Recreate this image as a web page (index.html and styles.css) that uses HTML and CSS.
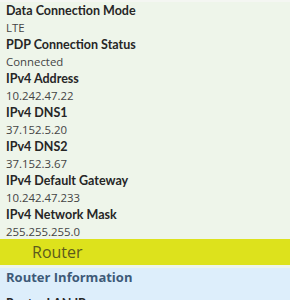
FILE: index.html
```html
<!DOCTYPE html>
<html>
<head>
<meta charset="utf-8">
<link rel="stylesheet" href="styles.css">
</head>
<body>
<div class="page">
  <div class="panel">
    <div class="topstrip"></div>
    <dl class="info">
      <dt>Data Connection Mode</dt><dd>LTE</dd>
      <dt>PDP Connection Status</dt><dd>Connected</dd>
      <dt>IPv4 Address</dt><dd>10.242.47.22</dd>
      <dt>IPv4 DNS1</dt><dd>37.152.5.20</dd>
      <dt>IPv4 DNS2</dt><dd>37.152.3.67</dd>
      <dt>IPv4 Default Gateway</dt><dd>10.242.47.233</dd>
      <dt>IPv4 Network Mask</dt><dd>255.255.255.0</dd>
    </dl>
    <div class="section">Router</div>
    <div class="subpanel">
      <div class="subtitle">Router Information</div>
      <div class="subrow">Router LAN IP</div>
    </div>
  </div>
</div>
</body>
</html>
```
FILE: styles.css
```css
html, body { margin: 0; padding: 0; background: #ffffff; }
body { font-family: "Open Sans", Lato, sans-serif; overflow: hidden; }
.page { width: 300px; height: 300px; display: flex; }
.panel { width: 290px; background: #eef5ea; display: flex; flex-direction: column; }
.topstrip { height: 2px; background: #f4f6f2; flex: none; }
.info { margin: 0; padding: 0 0 0 6px; flex: none; }
.info dt { font-family: Lato, "Open Sans", sans-serif; font-weight: 700; font-size: 12.5px; line-height: 17px; color: #262626; height: 17px; }
.info dd { margin: 0; font-size: 11.4px; line-height: 17px; color: #444; height: 17px; }
.section { margin-top: -1px; height: 26px; flex: none; background: #dde21c; color: #5c5a1c; font-size: 16px; line-height: 26px; padding-left: 32px; }
.subpanel { margin-top: 3px; background: #ddeefb; flex: 1; }
.subtitle { font-weight: 700; font-size: 13px; color: #3d5a78; line-height: 18px; padding-left: 6px; }
.subrow { font-family: Lato, "Open Sans", sans-serif; font-weight: 700; font-size: 12.5px; color: #262626; padding-left: 6px; margin-top: 9px; line-height: 17px; }
```
